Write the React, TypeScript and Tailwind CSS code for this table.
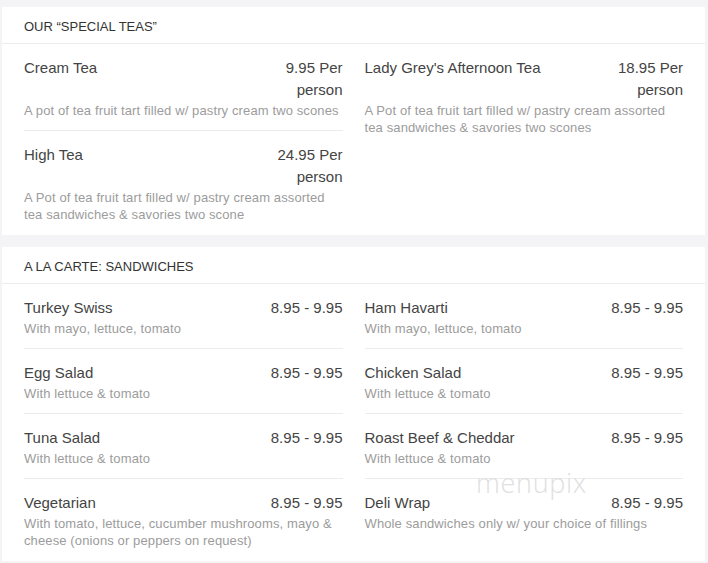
type Item = {
  name: string;
  price: string;
  desc: string;
};

type Section = {
  title: string;
  left: Item[];
  right: Item[];
};

const sections: Section[] = [
  {
    title: "Our “Special Teas”",
    left: [
      {
        name: "Cream Tea",
        price: "9.95 Per person",
        desc: "A pot of tea fruit tart filled w/ pastry cream two scones",
      },
      {
        name: "High Tea",
        price: "24.95 Per person",
        desc: "A Pot of tea fruit tart filled w/ pastry cream assorted tea sandwiches & savories two scone",
      },
    ],
    right: [
      {
        name: "Lady Grey's Afternoon Tea",
        price: "18.95 Per person",
        desc: "A Pot of tea fruit tart filled w/ pastry cream assorted tea sandwiches & savories two scones",
      },
    ],
  },
  {
    title: "A La Carte: Sandwiches",
    left: [
      { name: "Turkey Swiss", price: "8.95 - 9.95", desc: "With mayo, lettuce, tomato" },
      { name: "Egg Salad", price: "8.95 - 9.95", desc: "With lettuce & tomato" },
      { name: "Tuna Salad", price: "8.95 - 9.95", desc: "With lettuce & tomato" },
      {
        name: "Vegetarian",
        price: "8.95 - 9.95",
        desc: "With tomato, lettuce, cucumber mushrooms, mayo & cheese (onions or peppers on request)",
      },
    ],
    right: [
      { name: "Ham Havarti", price: "8.95 - 9.95", desc: "With mayo, lettuce, tomato" },
      { name: "Chicken Salad", price: "8.95 - 9.95", desc: "With lettuce & tomato" },
      { name: "Roast Beef & Cheddar", price: "8.95 - 9.95", desc: "With lettuce & tomato" },
      {
        name: "Deli Wrap",
        price: "8.95 - 9.95",
        desc: "Whole sandwiches only w/ your choice of fillings",
      },
    ],
  },
];

const MenuItem: React.FC<{ item: Item; last: boolean }> = ({ item, last }) => {
  return (
    <div className={last ? "pt-[13px] pb-3" : "pt-[13px] pb-[11px] border-b border-[#ececec]"}>
      <div className="flex justify-between gap-3 text-[15px] leading-[22px] text-[#444]">
        <span>{item.name}</span>
        <span className="max-w-[80px] shrink-0 text-right">{item.price}</span>
      </div>
      <p className="text-[13px] leading-[17px] tracking-[0.12px] text-[#9c9c9c] mt-px">{item.desc}</p>
    </div>
  );
};

const Column: React.FC<{ items: Item[] }> = ({ items }) => {
  return (
    <div className="flex flex-col">
      {items.map((item, i) => (
        <MenuItem key={item.name} item={item} last={i === items.length - 1} />
      ))}
    </div>
  );
};

export default function App() {
  return (
    <div
      className="relative min-h-[563px] bg-[#f4f4f7] pt-[7px] pl-[2px] pr-[3px] flex flex-col gap-3"
      style={{ fontFamily: '"Liberation Sans", Arial, sans-serif' }}
    >
      {sections.map((s) => (
        <div key={s.title} className="bg-white">
          <div className="px-[22px] pt-[3px] h-[37px] flex items-center border-b border-[#ececec] text-[13px] uppercase text-[#333]">
            {s.title}
          </div>
          <div className="grid grid-cols-2 gap-x-[22px] px-[22px]">
            <Column items={s.left} />
            <Column items={s.right} />
          </div>
        </div>
      ))}
      <div
        className="absolute left-[476px] top-[469px] text-[27px] leading-none tracking-wide text-[#e0e0e0] font-light pointer-events-none select-none"
        style={{ fontFamily: '"Open Sans", sans-serif' }}
      >
        menupix
      </div>
    </div>
  );
}
